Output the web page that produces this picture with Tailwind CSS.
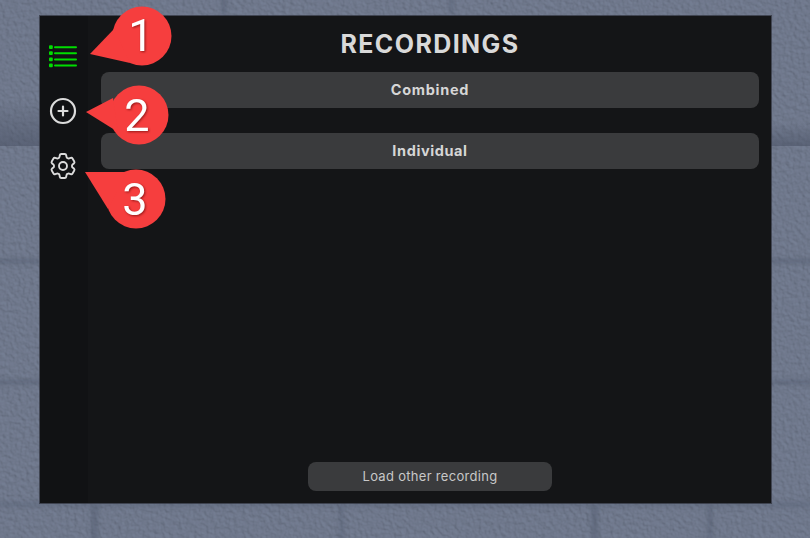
<!DOCTYPE html>
<html lang="en">
<head>
    <meta charset="UTF-8">
    <title>Recordings</title>
    <script src="https://cdn.jsdelivr.net/npm/@tailwindcss/browser@4"></script>
</head>
<body class="bg-[#6b7488]">
    <div class="relative w-[810px] h-[538px] overflow-hidden pt-[16px] pl-[40px] font-['Inter',sans-serif]">
        <!-- stone wall -->
        <svg class="absolute inset-0" width="810" height="538" viewBox="0 0 810 538">
            <defs>
                <filter id="stone" x="0" y="0" width="100%" height="100%">
                    <feTurbulence type="fractalNoise" baseFrequency="0.25" numOctaves="3" seed="7" result="n"/>
                    <feDiffuseLighting in="n" surfaceScale="0.8" diffuseConstant="1" lighting-color="#ffffff" result="l">
                        <feDistantLight azimuth="135" elevation="62"/>
                    </feDiffuseLighting>
                    <feComposite in="l" in2="SourceGraphic" operator="arithmetic" k1="1.13" k2="0" k3="0" k4="0"/>
                </filter>
                <filter id="soft"><feGaussianBlur stdDeviation="2.5"/></filter>
                <linearGradient id="shade" x1="0" y1="0" x2="0" y2="1">
                    <stop offset="0" stop-color="#474f62" stop-opacity="0"/>
                    <stop offset="1" stop-color="#474f62" stop-opacity=".55"/>
                </linearGradient>
            </defs>
            <rect width="810" height="538" fill="#6f788c" filter="url(#stone)"/>
            <rect x="0" y="100" width="40" height="46" fill="url(#shade)"/>
            <rect x="771" y="122" width="39" height="24" fill="url(#shade)"/>
            <g fill="#4a5266" opacity=".5" filter="url(#soft)">
                <rect x="-5" y="259" width="50" height="4"/>
                <rect x="770" y="259" width="45" height="4"/>
                <rect x="-5" y="380" width="50" height="4"/>
                <rect x="770" y="380" width="45" height="4"/>
                <rect x="-5" y="503" width="820" height="3"/>
                <rect x="92" y="503" width="5" height="40"/>
                <rect x="222" y="-5" width="4" height="20"/>
                <rect x="340" y="505" width="3" height="40"/>
                <rect x="592" y="505" width="5" height="40"/>
                <rect x="708" y="505" width="4" height="40"/>
                <rect x="450" y="-5" width="3" height="20"/>
            </g>
        </svg>

        <div class="relative flex w-[731px] h-[487px] bg-[#141517] shadow-[0_0_0_1px_rgba(45,49,58,0.7)]">
            <div class="w-[48px] bg-[#111214] flex flex-col items-center pt-[12px] pr-[2px]">
                <div class="h-[55px] flex items-center justify-center">
                    <svg width="28" height="24" viewBox="0 0 28 24" class="text-[#00dd00]" fill="currentColor">
                        <rect x="0" y="1.2" width="3.8" height="3.8" rx="1"/><rect x="5" y="2.2" width="23" height="2" rx="1"/>
                        <rect x="0" y="7.3" width="3.8" height="3.8" rx="1"/><rect x="5" y="8.2" width="23" height="2" rx="1"/>
                        <rect x="0" y="13.4" width="3.8" height="3.8" rx="1"/><rect x="5" y="14.4" width="23" height="2" rx="1"/>
                        <rect x="0" y="19.5" width="3.8" height="3.8" rx="1"/><rect x="5" y="20.4" width="23" height="2" rx="1"/>
                    </svg>
                </div>
                <div class="h-[55px] flex items-center justify-center">
                    <svg width="28" height="28" viewBox="0 0 28 28" fill="none" stroke="#dcdcdc" stroke-width="2.2" stroke-linecap="round">
                        <circle cx="14" cy="14" r="12"/>
                        <path d="M14 9.5v9M9.5 14h9"/>
                    </svg>
                </div>
                <div class="h-[55px] flex items-center justify-center">
                    <svg width="32" height="32" viewBox="0 0 24 24" fill="none" stroke="#dcdcdc" stroke-width="1.4" stroke-linejoin="round">
                        <path d="M9.594 3.94c.09-.542.56-.94 1.11-.94h2.593c.55 0 1.02.398 1.11.94l.213 1.281c.063.374.313.686.645.87.074.04.147.083.22.127.325.196.72.257 1.075.124l1.217-.456a1.125 1.125 0 0 1 1.37.49l1.296 2.247a1.125 1.125 0 0 1-.26 1.431l-1.003.827c-.293.241-.438.613-.43.992a7.723 7.723 0 0 1 0 .255c-.008.378.137.75.43.991l1.004.827c.424.35.534.955.26 1.43l-1.298 2.247a1.125 1.125 0 0 1-1.369.491l-1.217-.456c-.355-.133-.75-.072-1.076.124a6.47 6.47 0 0 1-.22.128c-.331.183-.581.495-.644.869l-.213 1.281c-.09.543-.56.94-1.11.94h-2.594c-.55 0-1.019-.398-1.11-.94l-.213-1.281c-.062-.374-.312-.686-.644-.87a6.52 6.52 0 0 1-.22-.127c-.325-.196-.72-.257-1.076-.124l-1.217.456a1.125 1.125 0 0 1-1.369-.49l-1.297-2.247a1.125 1.125 0 0 1 .26-1.431l1.004-.827c.292-.24.437-.613.43-.991a6.932 6.932 0 0 1 0-.255c.007-.38-.138-.751-.43-.992l-1.004-.827a1.125 1.125 0 0 1-.26-1.43l1.297-2.247a1.125 1.125 0 0 1 1.37-.491l1.216.456c.356.133.751.072 1.076-.124.072-.044.146-.086.22-.128.332-.183.582-.495.644-.869l.214-1.28Z"/>
                        <circle cx="12" cy="12" r="3"/>
                    </svg>
                </div>
            </div>
            <div class="flex-1 flex flex-col pl-[13px] pr-[12px] pb-[12px]">
                <h1 class="h-[56px] pt-[2px] flex items-center justify-center text-[25px] font-bold tracking-[1.4px] text-[#d9d9d9]">RECORDINGS</h1>
                <button class="h-[36px] rounded-lg bg-[#3a3b3d] text-[14.5px] font-bold tracking-[0.7px] text-[#d6d6d6]">Combined</button>
                <button class="h-[36px] mt-[25px] rounded-lg bg-[#3a3b3d] text-[14.5px] font-bold tracking-[0.6px] text-[#d6d6d6]">Individual</button>
                <button class="mt-auto self-center w-[244px] h-[29px] rounded-lg bg-[#3a3b3d] text-[13px] tracking-[0.3px] text-[#c8c8c8]">Load other recording</button>
            </div>
        </div>

        <!-- numbered callouts over the sidebar -->
        <svg class="absolute inset-0" width="810" height="538" viewBox="0 0 810 538">
            <g fill="#f63e3e">
                <circle cx="142" cy="36" r="29.5"/>
                <path d="M90 54 L114 29 L130 63 Z"/>
                <circle cx="139" cy="115" r="29.5"/>
                <path d="M86 112 L113 98 L118 132 Z"/>
                <circle cx="136" cy="199" r="29.5"/>
                <path d="M85 172 L127 172 L108 209 Z"/>
            </g>
            <g fill="#ffffff" font-family="Roboto, sans-serif" font-size="45" font-weight="400" text-anchor="middle" style="filter: drop-shadow(1px 1px 1px rgba(90,0,0,0.6))">
                <text x="141" y="51">1</text>
                <text x="137" y="131">2</text>
                <text x="135" y="215">3</text>
            </g>
        </svg>
    </div>
</body>
</html>
